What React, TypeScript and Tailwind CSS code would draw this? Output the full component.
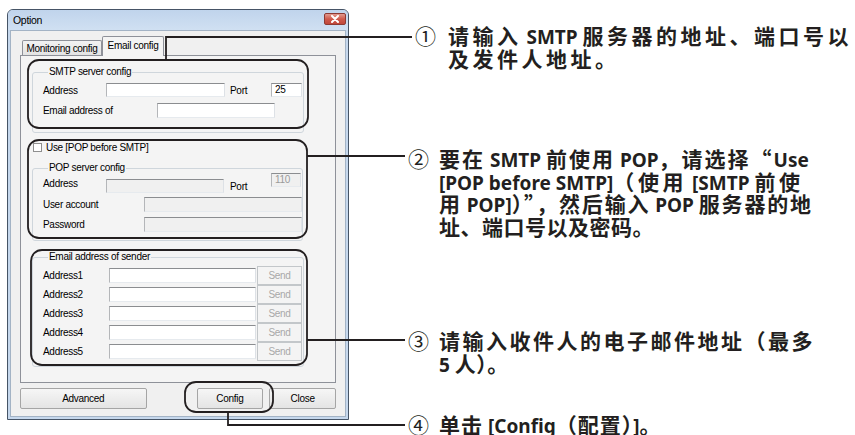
import type { ReactNode } from "react";

const CJK = /[\u3000-\u303f\u4e00-\u9fff\uff00-\uffef\u201c\u201d]/;
const SPLIT =
  /[\u3000-\u303f\u4e00-\u9fff\uff00-\uffef\u201c\u201d]+|[^\u3000-\u303f\u4e00-\u9fff\uff00-\uffef\u201c\u201d]+/g;

type Line = { text: string; tracking: string };

// CJK runs get the CJK face and the line's tracking (full lines are spread out)
function Mixed({ text, tracking }: Line) {
  const parts = text.match(SPLIT) ?? [];
  return (
    <>
      {parts.map((part, i) =>
        CJK.test(part) ? (
          <span
            className={`font-['Noto_Sans_CJK_SC'] text-[21px] ${tracking}`}
            key={i}
          >
            {part}
          </span>
        ) : (
          <span key={i}>{part}</span>
        )
      )}
    </>
  );
}

function Note({
  mark,
  lines,
  className,
  markWidth = "w-[31px]",
}: {
  mark: string;
  lines: Line[];
  className: string;
  markWidth?: string;
}) {
  return (
    <div className={`flex whitespace-nowrap ${className}`}>
      <span
        className={`${markWidth} h-[22px] shrink-0 font-['Noto_Sans_CJK_SC'] text-[21px] font-normal leading-[22px]`}
      >
        {mark}
      </span>
      <div>
        {lines.map((line) => (
          <div className="h-[22.5px]" key={line.text}>
            <Mixed text={line.text} tracking={line.tracking} />
          </div>
        ))}
      </div>
    </div>
  );
}

function Field({
  className = "",
  value,
  disabled = false,
}: {
  className?: string;
  value?: string;
  disabled?: boolean;
}) {
  return (
    <div
      className={`border border-t-[#8b8d90] border-l-[#b4b6b9] border-r-[#dde1e6] border-b-[#e6eaee] pl-[3px] leading-[12px] ${
        disabled ? "bg-[#f0f0f0] text-[#9a9a9a]" : "bg-white"
      } ${className}`}
    >
      {value}
    </div>
  );
}

function Group({
  title,
  className,
  children,
}: {
  title: string;
  className: string;
  children: ReactNode;
}) {
  return (
    <fieldset
      className={`rounded-[3px] border border-[#cfd6dc] pl-[10px] ${className}`}
    >
      <legend className="ml-[5px] px-[1px] leading-[12px]">{title}</legend>
      {children}
    </fieldset>
  );
}

function Button({ label, className }: { label: string; className: string }) {
  return (
    <div
      className={`flex h-[21px] items-center justify-center rounded-[2px] border border-[#a5a5a5] bg-gradient-to-b from-[#f6f6f6] to-[#e4e4e4] ${className}`}
    >
      {label}
    </div>
  );
}

function CloseIcon() {
  return (
    <svg className="h-[8px] w-[10px]" viewBox="0 0 10 8" aria-hidden="true">
      <path
        d="M2 1 8 7M8 1 2 7"
        stroke="white"
        strokeWidth="2"
        strokeLinecap="round"
      />
    </svg>
  );
}

function Dialog() {
  const senders = ["Address1", "Address2", "Address3", "Address4", "Address5"];
  return (
    <div className="ml-[7px] mt-[9px] flex h-[411px] w-[342px] shrink-0 flex-col rounded-t-[6px] border border-[#465466] bg-[#c6d8ed] font-['Liberation_Sans',Arial,sans-serif] text-[10px] tracking-[-0.3px] text-black">
      <div className="flex h-[20px] shrink-0 items-start justify-between rounded-t-[5px] bg-gradient-to-b from-[#c0d4ec] to-[#d0e0f2] pl-[5px] pr-[2px]">
        <span className="mt-[4px] text-[10.5px] leading-[12px]">Option</span>
        <div className="mt-[3px] flex h-[12px] w-[22px] items-center justify-center rounded-[2px] border border-[#8d3a33] bg-gradient-to-b from-[#e19a8f] via-[#cf5a4c] to-[#c0473a]">
          <CloseIcon />
        </div>
      </div>
      <div className="mx-[2px] mb-[2px] flex flex-1 flex-col border border-[#a3b3c5] bg-[#f0f0f0] px-[9px] pt-[5px]">
        <div className="flex h-[19px] items-end pl-[2px]">
          <div className="flex h-[15px] w-[80px] items-center justify-center rounded-t-[2px] border border-b-0 border-[#8e9199] bg-gradient-to-b from-[#f2f2f2] to-[#e3e3e3]">
            Monitoring config
          </div>
          <div className="relative z-10 -mb-px flex h-[20px] w-[62px] items-start justify-center rounded-t-[2px] border border-b-0 border-[#8e9199] bg-[#f4f4f4] pt-[3px] leading-[12px]">
            Email config
          </div>
        </div>
        <div className="flex h-[328px] flex-col border border-[#8e9199] bg-[#f4f4f4] pl-[11px] pt-[10px]">
          <Group className="w-[272px] pb-[14px]" title="SMTP server config">
            <div className="mt-[5px] flex h-[14px] items-center">
              <span className="w-[63px]">Address</span>
              <Field className="h-[14px] w-[119px]" />
              <span className="w-[46px] pl-[5px]">Port</span>
              <Field className="h-[14px] w-[31px]" value="25" />
            </div>
            <div className="mt-[6px] flex h-[15px] items-center">
              <span className="w-[114px]">Email address of</span>
              <Field className="h-[15px] w-[118px]" />
            </div>
          </Group>

          <div className="mt-[8px] flex h-[13px] items-center pl-[1px]">
            <span className="h-[9px] w-[9px] border border-[#8f8f8f] bg-white" />
            <span className="ml-[4px]">Use [POP before SMTP]</span>
          </div>

          <Group className="mt-[8px] w-[271px] pb-[8px]" title="POP server config">
            <div className="-mt-px flex h-[20px]">
              <span className="w-[63px] self-center">Address</span>
              <Field className="h-[14px] w-[118px] self-end" disabled />
              <span className="w-[47px] self-end pl-[6px] leading-[12px]">
                Port
              </span>
              <Field className="h-[14px] w-[30px]" disabled value="110" />
            </div>
            <div className="mt-[4px] flex h-[15px] items-center">
              <span className="w-[101px]">User account</span>
              <Field className="h-[15px] flex-1" disabled />
            </div>
            <div className="mt-[5px] flex h-[15px] items-center">
              <span className="w-[101px]">Password</span>
              <Field className="h-[15px] flex-1" disabled />
            </div>
          </Group>

          <Group className="mt-[10px] w-[272px] pb-[5px]" title="Email address of sender">
            <div className="mt-[3px] flex flex-col">
              {senders.map((name) => (
                <div className="flex h-[19px] items-center" key={name}>
                  <span className="w-[66px]">{name}</span>
                  <Field className="h-[15px] w-[147px]" />
                  <div className="ml-[1px] flex h-[19px] w-[45px] items-center justify-center border border-[#c3c7ca] bg-[#f4f4f4] text-[#a8a8a8]">
                    Send
                  </div>
                </div>
              ))}
            </div>
          </Group>
        </div>
        <div className="mt-[5px] flex">
          <Button className="w-[127px]" label="Advanced" />
          <Button className="ml-[50px] w-[67px]" label="Config" />
          <Button className="ml-[6px] w-[67px]" label="Close" />
        </div>
      </div>
    </div>
  );
}

function Callouts() {
  return (
    <svg
      className="pointer-events-none absolute inset-0 h-[435px] w-[855px]"
      viewBox="0 0 855 435"
      fill="none"
      stroke="#231f20"
      strokeWidth="1.8"
      aria-hidden="true"
    >
      <rect x="28" y="60" width="280" height="68" rx="11" />
      <rect x="28" y="140" width="279" height="98" rx="11" />
      <rect x="31" y="250" width="276" height="115" rx="11" />
      <rect x="185" y="382" width="88" height="30" rx="11" />
      <polyline points="166,60 166,37 412,37" />
      <line x1="307" y1="156" x2="405" y2="156" />
      <line x1="307" y1="340" x2="405" y2="340" />
      <polyline points="228,412 228,425 405,425" />
    </svg>
  );
}

export default function App() {
  return (
    <div className="relative flex h-[435px] w-[855px] items-start overflow-hidden bg-white">
      <Dialog />
      <div className="ml-[59px] flex flex-col font-['Noto_Sans','Noto_Sans_CJK_SC',sans-serif] text-[19px] font-bold leading-[22.5px] text-[#231f20]">
        <Note
          className="ml-[7px] mt-[24px]"
          lines={[
            { text: "请输入 SMTP 服务器的地址、端口号以", tracking: "tracking-[3.5px]" },
            { text: "及发件人地址。", tracking: "tracking-[3.5px]" },
          ]}
          mark="①"
          markWidth="w-[33px]"
        />
        <Note
          className="mt-[78px]"
          lines={[
            { text: "要在 SMTP 前使用 POP，请选择“Use", tracking: "tracking-[2px]" },
            { text: "[POP before SMTP]（使用 [SMTP 前使", tracking: "tracking-[3.6px]" },
            { text: "用 POP]）”，然后输入 POP 服务器的地", tracking: "tracking-[1.8px]" },
            { text: "址、端口号以及密码。", tracking: "tracking-[0.5px]" },
          ]}
          mark="②"
        />
        <Note
          className="mt-[92px]"
          lines={[
            { text: "请输入收件人的电子邮件地址（最多", tracking: "tracking-[2.5px]" },
            { text: "5 人）。", tracking: "tracking-[0.5px]" },
          ]}
          mark="③"
        />
        <Note
          className="mt-[39px]"
          lines={[{ text: "单击 [Config（配置）]。", tracking: "tracking-[1px]" }]}
          mark="④"
        />
      </div>
      <Callouts />
    </div>
  );
}
